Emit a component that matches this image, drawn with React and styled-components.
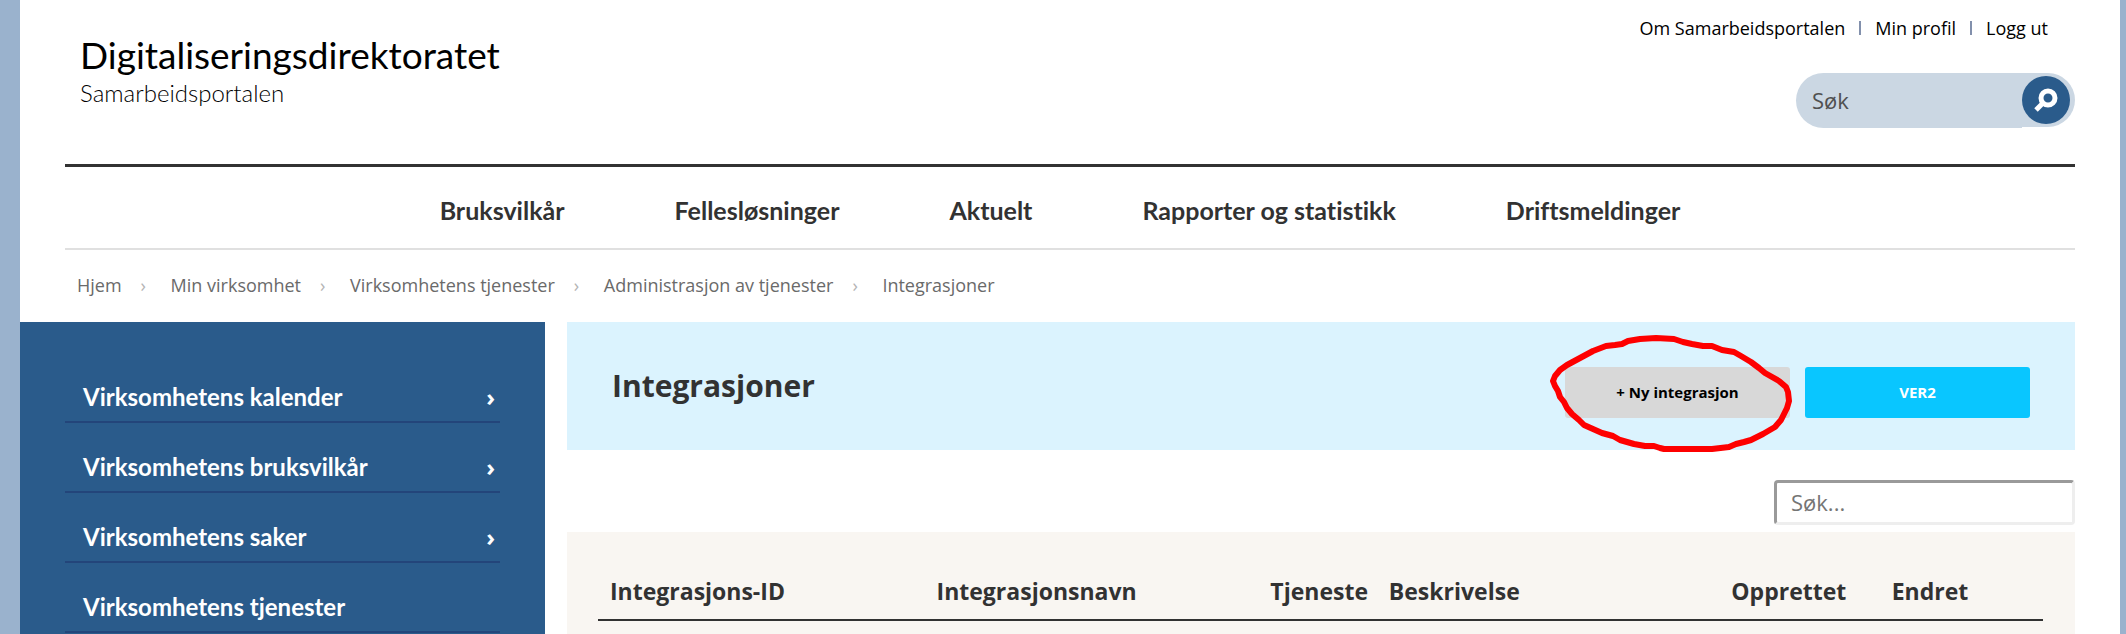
import React from "react";
import styled, { createGlobalStyle } from "styled-components";

const display = 'Lato, "Open Sans", sans-serif';
const body = '"Open Sans", "Noto Sans", sans-serif';

const GlobalStyle = createGlobalStyle`
  *, *::before, *::after { box-sizing: border-box; }
  body { margin: 0; background: #9ab2cd; color: #323232; font-family: ${body}; }
  a { color: inherit; text-decoration: none; }
  ul, ol { list-style: none; margin: 0; padding: 0; }
`;

const Page = styled.div`
  display: flex;
  flex-direction: column;
  min-height: 100vh;
  margin: 0 6px 0 20px;
  background: #fff;
`;

const Header = styled.header`
  margin: 0 45px;
`;

const Masthead = styled.div`
  display: flex;
  justify-content: space-between;
  height: 167px;
  border-bottom: 3px solid #323232;
`;

const Brand = styled.a`
  display: flex;
  flex-direction: column;
  padding: 33px 0 0 15px;
  color: #000;
  font-family: ${display};
`;

const BrandName = styled.span`
  font-size: 37px;
  line-height: 44px;
`;

const BrandSub = styled.span`
  font-size: 24px;
  font-weight: 300;
  line-height: 32px;
`;

const Tools = styled.div`
  display: flex;
  flex-direction: column;
  align-items: flex-end;
  gap: 33px;
  padding-top: 16px;
`;

const UserLinks = styled.ul`
  display: flex;
  padding-right: 27px;
  color: #000;
  font-size: 18px;
  line-height: 24px;
`;

const UserLink = styled.li`
  display: flex;
  align-items: center;

  & + &::before {
    content: "";
    width: 2px;
    height: 14px;
    margin: 0 14px;
    background: #8290ac;
  }
`;

const SiteSearch = styled.form`
  display: flex;
  align-items: flex-start;
`;

const SiteSearchInput = styled.input`
  width: 226px;
  height: 55px;
  padding: 0 16px 2px;
  border: 0;
  border-radius: 28px 0 0 28px;
  background: #cbd7e3;
  font: 22px ${body};

  &::placeholder { color: #505050; opacity: 1; }
`;

const SiteSearchEnd = styled.div`
  display: flex;
  padding: 3px 5px 3px 0;
  border-radius: 0 27px 27px 0;
  background: #cbd7e3;
`;

const SiteSearchButton = styled.button`
  display: grid;
  place-items: center;
  width: 48px;
  height: 48px;
  padding: 0;
  border: 0;
  border-radius: 50%;
  background: #2a5b8b;
`;

const MainNav = styled.nav`
  padding-right: 20px;
  border-bottom: 2px solid #e0e0e0;
`;

const MainNavList = styled.ul`
  display: flex;
  justify-content: center;
  gap: 110px;
  padding: 27px 0 22px;
  font: bold 25px/32px ${display};
  font-variant-ligatures: none;
`;

const Breadcrumbs = styled.ol`
  display: flex;
  padding: 22px 12px 24px;
  color: #6a6a6a;
  font-size: 18px;
  line-height: 26px;
`;

const Crumb = styled.li`
  & + &::before {
    content: "›";
    display: inline-block;
    width: 49px;
    padding-left: 19px;
    color: #b4b4b4;
  }
`;

const Columns = styled.div`
  display: flex;
  flex: 1;
`;

const Sidebar = styled.nav`
  flex: 0 0 25%;
  padding: 31px 45px 0;
  background: #2a5b8b;
  color: #fff;
`;

const SideLink = styled.a`
  display: flex;
  justify-content: space-between;
  padding: 28px 5px 8px 18px;
  border-bottom: 2px solid #23457a;
  font: bold 24px/32px ${display};
`;

const Chevron = styled.span`
  font-family: ${body};
`;

const Content = styled.main`
  display: flex;
  flex: 1;
  flex-direction: column;
  min-width: 0;
  padding: 0 45px 0 22px;
`;

const Hero = styled.section`
  display: flex;
  justify-content: space-between;
  align-items: flex-start;
  padding: 45px 45px 32px;
  background: #dbf3fe;
`;

const Title = styled.h1`
  margin: 0;
  font-size: 30px;
  font-weight: 700;
  line-height: 38px;
`;

const Actions = styled.div`
  display: flex;
  gap: 15px;
`;

const Marked = styled.div`
  position: relative;
`;

const ActionButton = styled.button`
  width: 225px;
  height: 51px;
  padding: 0 0 2px;
  border: 0;
  border-radius: 3px;
  background: ${(p) => (p.$primary ? "#09c6ff" : "#d8d8d8")};
  color: ${(p) => (p.$primary ? "#fff" : "#000")};
  font: bold 15px ${body};
`;

const Scribble = styled.svg`
  position: absolute;
  top: -36px;
  left: -18px;
  pointer-events: none;
`;

const FilterBar = styled.div`
  display: flex;
  justify-content: flex-end;
  padding: 30px 0 7px;
`;

const FilterInput = styled.input`
  width: 301px;
  height: 45px;
  padding: 0 14px 2px;
  border: 3px solid;
  border-color: #9a9a9a #eee #eee #9a9a9a;
  border-radius: 4px;
  background: #fff;
  font: 22px ${body};

  &::placeholder { color: #757575; opacity: 1; }
`;

const TablePanel = styled.section`
  flex: 1;
  padding: 41px 32px 0 31px;
  background: #f9f6f2;
`;

const Table = styled.table`
  width: 100%;
  border-collapse: collapse;
  table-layout: fixed;
`;

const HeadCell = styled.th`
  width: ${(p) => p.$width};
  padding: 3px 0 13px 12px;
  border-bottom: 2px solid #323232;
  font-size: 23px;
  line-height: 30px;
  text-align: left;
`;

const userLinks = ["Om Samarbeidsportalen", "Min profil", "Logg ut"];
const mainLinks = ["Bruksvilkår", "Fellesløsninger", "Aktuelt", "Rapporter og statistikk", "Driftsmeldinger"];
const crumbs = ["Hjem", "Min virksomhet", "Virksomhetens tjenester", "Administrasjon av tjenester", "Integrasjoner"];
const sideLinks = [
  { label: "Virksomhetens kalender", more: true },
  { label: "Virksomhetens bruksvilkår", more: true },
  { label: "Virksomhetens saker", more: true },
  { label: "Virksomhetens tjenester", more: false },
];
const columns = [
  { label: "Integrasjons-ID", width: "22.6%" },
  { label: "Integrasjonsnavn", width: "23.1%" },
  { label: "Tjeneste", width: "8.2%" },
  { label: "Beskrivelse", width: "23.7%" },
  { label: "Opprettet", width: "11.1%" },
  { label: "Endret", width: "11.3%" },
];

export default function App() {
  return (
    <>
      <GlobalStyle />
      <Page>
        <Header>
          <Masthead>
            <Brand href="#">
              <BrandName>Digitaliseringsdirektoratet</BrandName>
              <BrandSub>Samarbeidsportalen</BrandSub>
            </Brand>
            <Tools>
              <UserLinks>
                {userLinks.map((label) => (
                  <UserLink key={label}><a href="#">{label}</a></UserLink>
                ))}
              </UserLinks>
              <SiteSearch role="search">
                <SiteSearchInput type="text" placeholder="Søk" aria-label="Søk" />
                <SiteSearchEnd>
                  <SiteSearchButton type="button" aria-label="Utfør søk">
                    <svg width="28" height="28" viewBox="0 0 28 28" fill="none" stroke="#fff">
                      <circle cx="16" cy="12" r="7" strokeWidth="5" />
                      <path d="M11 17L4 24" strokeWidth="5" />
                    </svg>
                  </SiteSearchButton>
                </SiteSearchEnd>
              </SiteSearch>
            </Tools>
          </Masthead>
          <MainNav aria-label="Hovedmeny">
            <MainNavList>
              {mainLinks.map((label) => (
                <li key={label}><a href="#">{label}</a></li>
              ))}
            </MainNavList>
          </MainNav>
          <Breadcrumbs>
            {crumbs.map((label) => (
              <Crumb key={label}><a href="#">{label}</a></Crumb>
            ))}
          </Breadcrumbs>
        </Header>
        <Columns>
          <Sidebar aria-label="Min virksomhet">
            <ul>
              {sideLinks.map(({ label, more }) => (
                <li key={label}>
                  <SideLink href="#">
                    <span>{label}</span>
                    {more && <Chevron>›</Chevron>}
                  </SideLink>
                </li>
              ))}
            </ul>
          </Sidebar>
          <Content>
            <Hero>
              <Title>Integrasjoner</Title>
              <Actions>
                <Marked>
                  <ActionButton type="button">+ Ny integrasjon</ActionButton>
                  <Scribble width="248" height="124" viewBox="0 0 248 124" fill="none" stroke="#fe0000" strokeWidth="6" strokeLinejoin="round" aria-hidden="true">
                    <path d="M6 50L8 45L13 39L20 34L33 27L46 20L59 15L68 14L75 13L81 10L93 8L109 7L127 8L136 11L145 13L156 15L165 15L175 19L187 21L194 25L204 31L212 37L218 42L232 50L239 56L241 61L242 70L240 77L234 89L228 96L216 103L204 109L197 111L189 113L182 116L165 118H117L113 117L107 115L98 115L87 113L80 111L73 109L66 105L55 102L46 98L37 94L32 89L25 83L20 77L17 71L13 66L11 60L8 55Z" />
                  </Scribble>
                </Marked>
                <ActionButton type="button" $primary>VER2</ActionButton>
              </Actions>
            </Hero>
            <FilterBar>
              <FilterInput type="text" placeholder="Søk..." aria-label="Søk i integrasjoner" />
            </FilterBar>
            <TablePanel>
              <Table>
                <thead>
                  <tr>
                    {columns.map(({ label, width }) => (
                      <HeadCell key={label} scope="col" $width={width}>{label}</HeadCell>
                    ))}
                  </tr>
                </thead>
              </Table>
            </TablePanel>
          </Content>
        </Columns>
      </Page>
    </>
  );
}
